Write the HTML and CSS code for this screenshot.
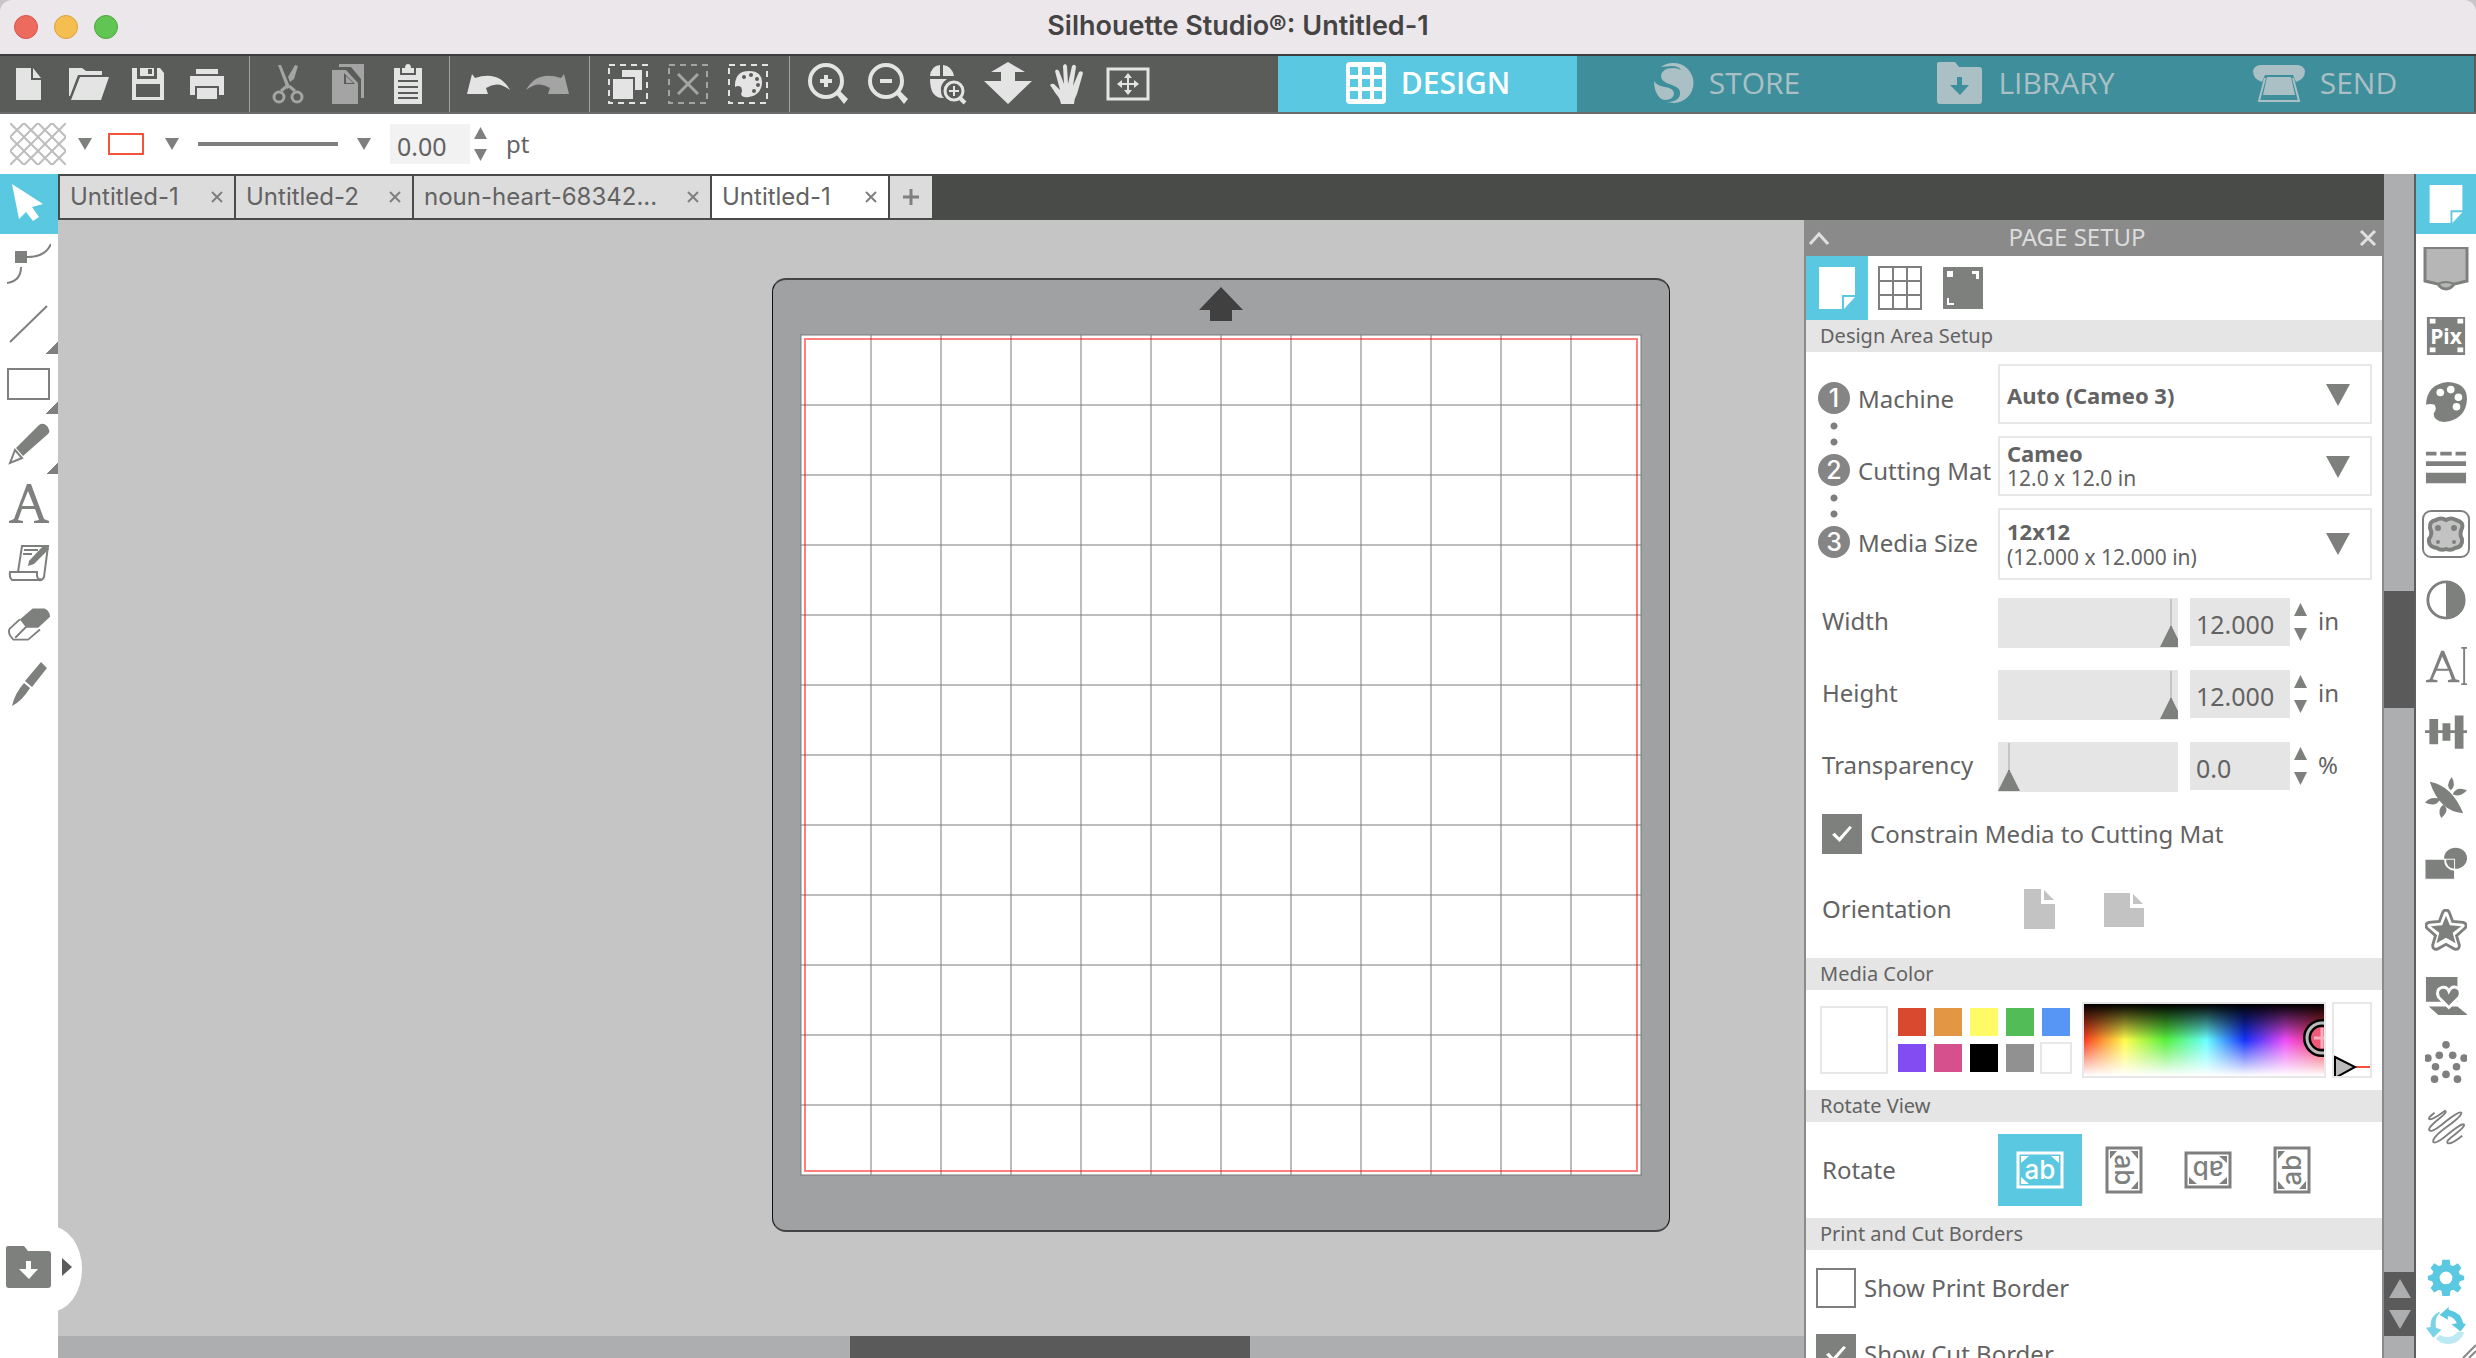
FILE: index.html
```html
<!DOCTYPE html>
<html lang="en">
<head>
<meta charset="utf-8">
<title>Silhouette Studio®: Untitled-1</title>
<link rel="stylesheet" href="styles.css">
</head>
<body>
<svg class="defs" aria-hidden="true">
  <symbol id="i-page" viewBox="0 0 44 44"><path d="M4 1h36v28H27v14H4z"/><path d="M29 31h11L29 43z"/></symbol>
  <symbol id="i-folder" viewBox="0 0 48 44"><path d="M3 1h16l4 5h20q3 0 3 3v31q0 3-3 3H4q-3 0-3-3V3q0-2 2-2z"/><path class="hole" d="M21 16h5v8h7l-9 10-10-10h7z"/></symbol>
  <pattern id="hatch" width="14" height="14" patternUnits="userSpaceOnUse"><path d="M0 0l14 14M14 0L0 14" stroke="#bdbdbd" stroke-width="2" fill="none"/></pattern>
</svg>

<header class="titlebar">
  <div class="lights"><button class="light red" aria-label="Close"></button><button class="light amber" aria-label="Minimize"></button><button class="light green" aria-label="Zoom"></button></div>
  <h1>Silhouette Studio®: Untitled-1</h1>
</header>

<div class="toolbar">
  <div class="group first">
    <button class="tool" aria-label="New"><svg viewBox="0 0 44 44"><path d="M8 6h15v12h10v20H8z"/><path d="M25 6l8 10h-8z"/></svg></button>
    <button class="tool" aria-label="Open"><svg viewBox="0 0 44 44"><path d="M2 6h13l4 3h16v4H11L3 34H2z"/><path d="M13 15h29l-8 23H4z"/></svg></button>
    <button class="tool" aria-label="Save"><svg viewBox="0 0 44 44"><path fill-rule="evenodd" d="M6 6h5v11h20V6h3l4 5v27H6zM10 22v13h24V22z"/><path fill-rule="evenodd" d="M14 6h14v8H14zM22 7v5h4V7z"/></svg></button>
    <button class="tool" aria-label="Print"><svg viewBox="0 0 44 44"><path d="M11 7h22v5H11zM5 14h34v19h-5V24H10v9H5z"/><path d="M12 26h20v11H12z"/></svg></button>
  </div>
  <div class="group">
    <button class="tool off" aria-label="Cut"><svg viewBox="0 0 44 44"><path d="M12 3l3 0 9 22-3 2zM29 3l3 1-4 13-4 3-2-5z"/><path fill="none" stroke="currentColor" stroke-width="3" d="M21 24l-6 5M23 24l6 5"/><circle cx="13" cy="35" r="5" fill="none" stroke="currentColor" stroke-width="3"/><circle cx="31" cy="35" r="5" fill="none" stroke="currentColor" stroke-width="3"/></svg></button>
    <button class="tool off" aria-label="Copy"><svg viewBox="0 0 44 44"><path d="M13 2h25v34h-3V17L25 5H13z"/><path fill-rule="evenodd" d="M6 8h14l12 13v21H6zM18 11v11h11z"/><path d="M20 14l7 7h-7z"/></svg></button>
    <button class="tool" aria-label="Paste"><svg viewBox="0 0 44 44"><path d="M8 6h6v7h16V6h6v36H8z"/><path d="M16 6h3q0-4 3-4t3 4h3v5H16z"/><path class="dark" d="M12 18h20v2H12zM12 24h20v2H12zM12 30h20v2H12zM12 35h20v2H12z"/></svg></button>
  </div>
  <div class="group">
    <button class="tool" aria-label="Undo"><svg viewBox="0 0 44 44"><path d="M6 12l3 4q24-8 35 12Q32 18 20 26l2 6H1z"/></svg></button>
    <button class="tool off" aria-label="Redo"><svg viewBox="0 0 44 44"><path d="M38 12l-3 4Q11 8 0 28q12-10 24-2l-2 6h21z"/></svg></button>
  </div>
  <div class="group">
    <button class="tool" aria-label="Select all"><svg viewBox="0 0 44 44"><rect x="3" y="3" width="38" height="38" class="dash"/><path d="M16 8h20v20H29V15H16z"/><path d="M7 17h20v20H7z"/></svg></button>
    <button class="tool off" aria-label="Deselect"><svg viewBox="0 0 44 44"><rect x="3" y="3" width="38" height="38" class="dash"/><path class="line3" d="M12 12l20 20M32 12L12 32"/></svg></button>
    <button class="tool" aria-label="Select by color"><svg viewBox="0 0 44 44"><rect x="3" y="3" width="38" height="38" class="dash"/><path d="M9 22q1-13 14-13t13 12q-1 12-13 14-7 1-8-3 2-3 0-7-3-2-6 0z"/><g class="dark"><circle cx="18" cy="15" r="2"/><circle cx="25" cy="13" r="2"/><circle cx="31" cy="17" r="2"/><circle cx="32" cy="23" r="2"/><circle cx="28" cy="29" r="2"/></g></svg></button>
  </div>
  <div class="group last">
    <button class="tool" aria-label="Zoom in"><svg viewBox="0 0 44 44"><circle cx="20" cy="19" r="16" class="line4"/><path class="line4" d="M14 19h12M20 13v12"/><path d="M30 32l4-3 8 8-4 5z"/></svg></button>
    <button class="tool" aria-label="Zoom out"><svg viewBox="0 0 44 44"><circle cx="20" cy="19" r="16" class="line4"/><path class="line4" d="M14 19h12"/><path d="M30 32l4-3 8 8-4 5z"/></svg></button>
    <button class="tool" aria-label="Zoom selection"><svg viewBox="0 0 44 44"><path d="M4 14Q5 4 14 3v11zM17 3q9 1 11 11H17zM4 17h17q-7 5-6 12 0 5 3 7Q4 37 4 17z"/><circle cx="28" cy="29" r="9" fill="none" stroke="currentColor" stroke-width="3"/><path fill="none" stroke="currentColor" stroke-width="2" d="M23 29h10M28 24v10"/><path class="line4" d="M34 36l5 5"/></svg></button>
    <button class="tool wide" aria-label="Drag zoom"><svg viewBox="0 0 48 44"><path d="M24 0l17 10H31v9h17L24 42 0 19h17v-9H7z"/></svg></button>
    <button class="tool" aria-label="Pan"><svg viewBox="0 0 44 44"><path d="M15 42q-1-6-5-10L4 23q2-2 4-1l6 6L9 9q2-3 4 0l5 13-1-18q2-4 4 0l1 18 4-18q3-3 4 1l-3 19 6-14q3-2 4 1l-6 21q-3 5-3 10z"/></svg></button>
    <button class="tool" aria-label="Fit to page"><svg viewBox="0 0 44 44"><rect x="2" y="7" width="40" height="30" fill="none" stroke="currentColor" stroke-width="3"/><path fill="none" stroke="currentColor" stroke-width="2" d="M12 22h20M22 12v20"/><path d="M22 11l4 5h-8zM22 33l4-5h-8zM11 22l5-4v8zM33 22l-5-4v8z"/></svg></button>
  </div>
  <nav class="modes">
    <a href="#design" class="mode current"><svg class="mode-icon" viewBox="0 0 42 44"><rect x="1" y="1" width="40" height="42" rx="4"/><path class="gap" d="M5 6h8v8H5zM17 6h8v8h-8zM29 6h8v8h-8zM5 18h8v8H5zM17 18h8v8h-8zM29 18h8v8h-8zM5 30h8v8H5zM17 30h8v8h-8zM29 30h8v8h-8z"/></svg>DESIGN</a>
    <a href="#store" class="mode"><svg class="mode-icon" viewBox="0 0 42 44"><path d="M20 2a20 20 0 0 1 1 40l-8-1q13 0 14-8 1-6-8-9-11-3-11-9 1-8 12-8 5 0 8 2-2-4-10-4l-10 1q5-4 12-4z"/><path d="M1 20q3 5 11 6 8 1 9 6 0 6-8 7-4 0-6-2Q1 31 1 20z"/></svg>STORE</a>
    <a href="#library" class="mode"><svg class="mode-icon folder" viewBox="0 0 48 44"><use href="#i-folder"/></svg>LIBRARY</a>
    <a href="#send" class="mode"><svg class="mode-icon send" viewBox="0 0 54 40"><path d="M8 2h38q6 1 7 6 0 8-9 11l-3-7H13l-3 7Q1 16 1 8q1-5 7-6z"/><path d="M15 14h24l4 18H11z"/><path fill="none" stroke="currentColor" stroke-width="2" d="M13 15L7 38h40l-6-23"/></svg>SEND</a>
  </nav>
</div>

<div class="options">
  <button class="fill" aria-label="Fill pattern"><svg viewBox="0 0 56 42"><rect width="56" height="42" fill="url(#hatch)"/></svg></button>
  <button class="tri-down" aria-label="Fill menu"></button>
  <button class="stroke-box" aria-label="Line color"></button>
  <button class="tri-down" aria-label="Line color menu"></button>
  <button class="stroke-line" aria-label="Line style"></button>
  <button class="tri-down" aria-label="Line style menu"></button>
  <input id="weight" class="weight" type="text" value="0.00">
  <span class="spin"><button class="up" aria-label="Increase"></button><button class="down" aria-label="Decrease"></button></span>
  <label for="weight">pt</label>
</div>

<div class="main">
  <aside class="left">
    <button class="ltool active" aria-label="Select"><svg viewBox="0 0 44 44"><path d="M5 2l31 20-11 3 7 10-6 4-7-9-7 7z"/></svg></button>
    <button class="ltool" aria-label="Edit points"><svg viewBox="0 0 44 44"><path class="line" d="M0 41q14-2 14-16M18 15q20 1 26-13"/><path d="M8 9h12v12H8z"/></svg></button>
    <button class="ltool more" aria-label="Line"><svg viewBox="0 0 44 44"><path class="line" d="M3 40L40 4"/></svg></button>
    <button class="ltool more" aria-label="Rectangle"><svg viewBox="0 0 44 44"><rect x="1" y="7" width="41" height="30" class="line"/></svg></button>
    <button class="ltool more" aria-label="Draw"><svg viewBox="0 0 44 44"><path d="M9 26L32 3q4-3 8 1 4 5 1 8L16 34z"/><path class="line" d="M8 28L3 41l12-5z"/></svg></button>
    <button class="ltool" aria-label="Text"><svg viewBox="0 0 44 44"><path fill-rule="evenodd" d="M20 2h4l13 35 5 2v2H27v-2l5-1-4-11H15l-4 11 5 1v2H2v-2l5-2zM21 9l-6 15h12z"/></svg></button>
    <button class="ltool" aria-label="Sketch"><svg viewBox="0 0 44 44"><path class="thin" d="M11 30l4-26h26l-4 31q-2 4-5 3H5q-3-3-2-8h27v4q1 4 4 3M17 8h14M16 12h9"/><path d="M22 19L37 3l5 4-15 15-6 2z"/></svg></button>
    <button class="ltool" aria-label="Erase"><svg viewBox="0 0 48 44"><path d="M14 17L28 5h13q6 3 6 9L34 26H21z"/><path class="line" d="M14 17L3 27q-3 5 4 12h16l13-11M21 25L9 37"/></svg></button>
    <button class="ltool" aria-label="Knife"><svg viewBox="0 0 44 44"><path d="M34 0l6 6-15 19-7-6zM17 21l6 5Q15 39 5 44q3-13 12-23z"/></svg></button>
    <button class="drawer" aria-label="Open library"><svg viewBox="0 0 48 44"><use href="#i-folder"/></svg></button>
  </aside>

  <section class="work">
    <div class="tabs">
      <div class="tab t1"><a href="#t1">Untitled-1</a><button aria-label="Close tab"><svg viewBox="0 0 14 14"><path d="M2 2l10 10M12 2L2 12"/></svg></button></div>
      <div class="tab t2"><a href="#t2">Untitled-2</a><button aria-label="Close tab"><svg viewBox="0 0 14 14"><path d="M2 2l10 10M12 2L2 12"/></svg></button></div>
      <div class="tab t3"><a href="#t3">noun-heart-68342...</a><button aria-label="Close tab"><svg viewBox="0 0 14 14"><path d="M2 2l10 10M12 2L2 12"/></svg></button></div>
      <div class="tab t2 on"><a href="#t4">Untitled-1</a><button aria-label="Close tab"><svg viewBox="0 0 14 14"><path d="M2 2l10 10M12 2L2 12"/></svg></button></div>
      <button class="tab plus" aria-label="New tab"><svg viewBox="0 0 16 16"><path d="M8 0v16M0 8h16"/></svg></button>
    </div>
    <div class="stage">
      <div class="canvas">
        <div class="mat">
          <svg class="arrow" viewBox="0 0 44 34"><path d="M22 0l22 23H33v11H11V23H0z"/></svg>
          <div class="sheet"></div>
        </div>
      </div>
      <div class="hscroll"><div class="hthumb"></div></div>

      <section class="panel">
        <header class="panel-head">
          <button aria-label="Collapse"><svg viewBox="0 0 22 16"><path d="M2 14l9-10 9 10"/></svg></button>
          <h2>PAGE SETUP</h2>
          <button aria-label="Close panel"><svg viewBox="0 0 22 16"><path d="M3 1l14 14M17 1L3 15"/></svg></button>
        </header>
        <div class="panel-tabs">
          <button class="ptab active" aria-label="Page"><svg viewBox="0 0 44 44"><use href="#i-page"/></svg></button>
          <button class="ptab" aria-label="Grid"><svg viewBox="0 0 44 44"><path class="line" d="M1 1h42v42H1zM15 1v42M29 1v42M1 15h42M1 29h42"/></svg></button>
          <button class="ptab" aria-label="Registration marks"><svg viewBox="0 0 44 44"><path d="M2 1h40v42H2z"/><path class="white" d="M6 5h6v6H6zM31 5h7v8h-3V8h-4zM6 32h2v5h5v2H6z"/></svg></button>
        </div>
        <h3>Design Area Setup</h3>
        <div class="setup">
          <div class="pick"><span class="badge">1</span><label for="machine">Machine</label><span class="combo"><select id="machine"><option>Auto (Cameo 3)</option></select></span></div>
          <div class="pick dots"><span class="badge">2</span><label for="mat">Cutting Mat</label><span class="combo two"><select id="mat"><option>Cameo</option></select><span class="detail">12.0 x 12.0 in</span></span></div>
          <div class="pick dots"><span class="badge">3</span><label for="media">Media Size</label><span class="combo two tall"><select id="media"><option>12x12</option></select><span class="detail">(12.000 x 12.000 in)</span></span></div>
        </div>
        <div class="measures">
          <div class="measure"><label for="w">Width</label><span class="track"><input type="range" aria-label="Width slider" min="0" max="12" value="12"></span><input id="w" type="text" value="12.000"><span class="spin"><button class="up" aria-label="Increase"></button><button class="down" aria-label="Decrease"></button></span><span class="unit">in</span></div>
          <div class="measure"><label for="h">Height</label><span class="track"><input type="range" aria-label="Height slider" min="0" max="12" value="12"></span><input id="h" type="text" value="12.000"><span class="spin"><button class="up" aria-label="Increase"></button><button class="down" aria-label="Decrease"></button></span><span class="unit">in</span></div>
          <div class="measure"><label for="t">Transparency</label><span class="track"><input type="range" aria-label="Transparency slider" min="0" max="100" value="0"></span><input id="t" type="text" value="0.0"><span class="spin"><button class="up" aria-label="Increase"></button><button class="down" aria-label="Decrease"></button></span><span class="unit">%</span></div>
        </div>
        <label class="check constrain"><input type="checkbox" checked>Constrain Media to Cutting Mat</label>
        <div class="orient"><span>Orientation</span>
          <button aria-label="Portrait"><svg viewBox="0 0 44 44"><path d="M6 2h17v15h14v25H6z"/><path d="M26 3l10 10H26z"/></svg></button>
          <button aria-label="Landscape"><svg viewBox="0 0 44 44"><path d="M2 6h26v15h14v19H2z"/><path d="M31 7l10 10H31z"/></svg></button>
        </div>
        <h3>Media Color</h3>
        <div class="colors">
          <button class="swatch-big" aria-label="Current color"></button>
          <div class="swatches">
            <button class="c1" aria-label="Red"></button><button class="c2" aria-label="Orange"></button><button class="c3" aria-label="Yellow"></button><button class="c4" aria-label="Green"></button><button class="c5" aria-label="Blue"></button>
            <button class="c6" aria-label="Purple"></button><button class="c7" aria-label="Pink"></button><button class="c8" aria-label="Black"></button><button class="c9" aria-label="Gray"></button><button class="c10" aria-label="White"></button>
          </div>
          <div class="spectrum"><svg viewBox="0 0 40 72"><circle cx="38" cy="34" r="15" fill="#f05a78" stroke="#000" stroke-width="8"/><circle cx="38" cy="34" r="15" fill="none" stroke="#bbb" stroke-width="3"/><path d="M38 24v20M30 34h10" stroke="#f8b0be" stroke-width="3"/></svg></div>
          <div class="shade"><svg viewBox="0 0 36 72"><path d="M22 63h14" stroke="#f4503a" stroke-width="2"/><path d="M1 53l20 10L1 74z" fill="#bbb" stroke="#000" stroke-width="2"/></svg></div>
        </div>
        <h3>Rotate View</h3>
        <div class="rotate"><span>Rotate</span>
          <button class="active" aria-label="Rotate 0"><svg viewBox="0 0 48 48"><g id="ab"><rect x="2" y="7" width="44" height="34" fill="none" stroke="currentColor" stroke-width="3"/><path d="M5 10h8l-8 7zM43 10h-8l8 7zM5 38h8l-8-7z"/><text x="24" y="33" text-anchor="middle" font-size="26" font-weight="500" font-family="Inter, sans-serif">ab</text></g></svg></button>
          <button aria-label="Rotate 90"><svg viewBox="0 0 48 48"><g transform="rotate(90 24 24)"><use href="#ab"/></g></svg></button>
          <button aria-label="Rotate 180"><svg viewBox="0 0 48 48"><g transform="rotate(180 24 24)"><use href="#ab"/></g></svg></button>
          <button aria-label="Rotate 270"><svg viewBox="0 0 48 48"><g transform="rotate(270 24 24)"><use href="#ab"/></g></svg></button>
        </div>
        <h3>Print and Cut Borders</h3>
        <div class="borders">
          <label class="check"><input type="checkbox">Show Print Border</label>
          <label class="check"><input type="checkbox" checked>Show Cut Border</label>
        </div>
      </section>
    </div>
  </section>

  <div class="vscroll">
    <div class="vthumb"></div>
    <div class="varrows"><button class="up" aria-label="Scroll up"></button><button class="down" aria-label="Scroll down"></button></div>
  </div>

  <aside class="right">
    <button class="rtool active" aria-label="Page setup"><svg viewBox="0 0 44 44"><use href="#i-page"/></svg></button>
    <button class="rtool" aria-label="Mat"><svg viewBox="0 0 48 48"><path d="M4 2h40v34H34q-4 7-10 7t-10-7H4z" fill="#b5b6b5"/><path fill="none" stroke="currentColor" stroke-width="3" d="M3 1v34l13 3q3 5 8 5t8-5l13-3V1"/><path class="thin" d="M3 2h42M16 38q8-4 16 0"/></svg></button>
    <button class="rtool" aria-label="PixScan"><svg viewBox="0 0 44 44"><path d="M2 2h40v40H2z"/><path class="white" d="M5 4h6v5H5zM34 4h6v5h-6zM5 34h6v5H5zM34 34h6v5h-6z"/><text class="white" x="22" y="30" text-anchor="middle" font-size="22" font-weight="700" font-family="Open Sans, sans-serif">Pix</text></svg></button>
    <button class="rtool" aria-label="Fill"><svg viewBox="0 0 44 44"><path d="M1 25Q2 3 24 1q20 1 20 18-1 21-24 24-11-1-11-9 4-4 1-9-5-2-9 0z"/><g class="white"><circle cx="16" cy="12" r="4"/><circle cx="27" cy="9" r="4"/><circle cx="35" cy="17" r="4"/><circle cx="33" cy="27" r="4"/></g></svg></button>
    <button class="rtool" aria-label="Line style"><svg viewBox="0 0 44 44"><path d="M1 5h11v4H1zM16 5h12v4H16zM32 5h11v4H32zM1 15h42v5H1zM1 27h42v11H1z"/></svg></button>
    <button class="rtool" aria-label="Trace"><svg viewBox="0 0 48 48"><rect x="1" y="1" width="46" height="46" rx="8" fill="none" stroke="currentColor" stroke-width="2"/><path d="M24 10q5-3 10 0 8 2 6 8-3 6 0 11 1 8-7 9-4 3-9 1-5 2-9-1-9-1-8-9 4-5 1-11-1-7 6-8 5-3 10 0z" fill="#c2c3c2" stroke="currentColor" stroke-width="4"/><circle cx="16" cy="18" r="3"/><circle cx="32" cy="18" r="3"/><circle cx="16" cy="32" r="2"/><circle cx="32" cy="32" r="2"/></svg></button>
    <button class="rtool" aria-label="Image effects"><svg viewBox="0 0 44 44"><circle cx="22" cy="22" r="19" fill="none" stroke="currentColor" stroke-width="3"/><path d="M22 3a19 19 0 0 1 0 38z"/></svg></button>
    <button class="rtool" aria-label="Text style"><svg viewBox="0 0 44 44"><path fill-rule="evenodd" d="M17 6h3l12 30 4 1v2H24v-2l4-1-3-9H12l-4 9 5 1v2H1v-2l4-1zM18 12l-5 13h11z"/><path class="thin" d="M41 3v38M38 3h6M38 41h6"/></svg></button>
    <button class="rtool" aria-label="Align"><svg viewBox="0 0 48 44"><path d="M0 20h48v3H0zM5 7h10v29H5zM20 12h9v20h-9zM34 3h10v38H34z"/></svg></button>
    <button class="rtool" aria-label="Replicate"><svg viewBox="0 0 44 44"><path d="M5 5q23 4 35 33Q15 36 5 5zM28 0q5 9-1 14-6-5 1-14zM44 14q-7 8-15 4 4-9 15-4zM0 27q5-7 16-4-4 9-16 4zM17 43q-5-9 2-14 8 5-2 14z"/></svg></button>
    <button class="rtool" aria-label="Modify"><svg viewBox="0 0 44 44"><ellipse cx="32" cy="16" rx="12" ry="11"/><path d="M0 17h31v21H0z" stroke="#fff" stroke-width="1"/><path d="M21 17q0 10 10 11" fill="none" stroke="#fff" stroke-width="2"/></svg></button>
    <button class="rtool" aria-label="Offset"><svg viewBox="0 0 44 44"><path d="M22 1q3 0 4 4l3 8 11 1q5 2 2 6l-9 8 3 10q0 5-5 4l-9-5-9 5q-5 1-5-4l3-10-9-8q-3-4 2-6l11-1 3-8q1-4 4-4z" fill="none" stroke="currentColor" stroke-width="3"/><path d="M22 7l4 10 12 1-9 7 3 11-10-6-10 6 3-11-9-7 12-1z"/></svg></button>
    <button class="rtool" aria-label="3D"><svg viewBox="0 0 44 44"><path d="M1 2h33v26H1zM4 33h30l11 9H14z"/><path d="M25 34L14 23q-3-8 4-10 5-1 7 4 3-6 8-4 6 3 3 10z" stroke="#fff" stroke-width="3"/></svg></button>
    <button class="rtool" aria-label="Stipple"><svg viewBox="0 0 44 44"><circle cx="22" cy="4" r="4"/><circle cx="3" cy="18" r="4"/><circle cx="15" cy="15" r="4"/><circle cx="29" cy="15" r="4"/><circle cx="41" cy="18" r="4"/><circle cx="11" cy="27" r="4"/><circle cx="33" cy="27" r="4"/><circle cx="22" cy="35" r="4"/><circle cx="10" cy="40" r="4"/><circle cx="34" cy="40" r="4"/></svg></button>
    <button class="rtool" aria-label="Sketch effects"><svg viewBox="0 0 44 44"><path class="line" d="M10 6q-8 6-5 7 4 0 16-9 3 1-6 8-15 12-9 13 3 1 16-10 14-11 16-9 1 3-14 14Q6 33 9 37q3 2 17-10 15-12 15-8 0 2-10 10-10 7-7 9 4 1 15-8"/></svg></button>
    <button class="rtool blue push" aria-label="Preferences"><svg viewBox="0 0 44 44"><path fill-rule="evenodd" d="M18 3h8l1 6 3 1 5-3 4 5-3 4 1 3 5 2v4l-5 2-1 3 3 4-4 5-5-3-3 1-1 6h-8l-1-6-3-1-5 3-4-5 3-4-1-3-5-2v-4l5-2 1-3-3-4 4-5 5 3 3-1zM22 16a7 7 0 1 0 0 14 7 7 0 0 0 0-14z"/></svg></button>
    <button class="rtool blue" aria-label="Sync"><svg viewBox="0 0 44 44"><path d="M15 10l10-9v3q14 3 16 15l3 1-6 8-10-8 6-1q-3-7-10-8v4z"/><path opacity=".8" d="M15 6Q4 11 5 23l-5 1 8 11 9-9-6-2Q9 13 15 8z"/><path opacity=".4" d="M42 29q-4 12-17 13-9 0-14-6l4-4q12 6 20-4z"/></svg></button>
    <svg class="grip" viewBox="0 0 14 14"><path d="M1 14L14 1M7 14l7-7"/></svg>
  </aside>
</div>
</body>
</html>
```
FILE: styles.css
```css
:root {
  --accent: #5ac8e0;
  --dark: #5a5c5a;
  --icon: #7e807e;
  --text: #636363;
  --soft: #e5e5e5;
  --ui: "Noto Sans", "Open Sans", sans-serif;
  --sys: Inter, "Liberation Sans", sans-serif;
}
* { box-sizing: border-box; }
html, body { height: 100%; }
body {
  margin: 0;
  display: flex;
  flex-direction: column;
  overflow: hidden;
  background: #c9c5c8;
  color: var(--text);
  font: 24px/32px var(--ui);
}
button { padding: 0; border: 0; background: none; color: inherit; font: inherit; display: grid; place-items: center; }
svg { display: block; fill: currentColor; }
h1, h2, h3 { margin: 0; font-weight: 400; }
a { color: inherit; text-decoration: none; }
.defs { position: absolute; width: 0; height: 0; }
.line, .thin { fill: none; stroke: currentColor; stroke-width: 2; }
.line3 { fill: none; stroke: currentColor; stroke-width: 3; }
.line4 { fill: none; stroke: currentColor; stroke-width: 4; }
.white { fill: #fff; }
.dark { fill: var(--dark); }
.dash { fill: none; stroke: currentColor; stroke-width: 2; stroke-dasharray: 6 5; }

.titlebar {
  flex: none;
  height: 54px;
  display: grid;
  grid-template-columns: 200px 1fr 200px;
  align-items: center;
  background: #ece7ea;
  border-radius: 12px 12px 0 0;
}
.lights { display: flex; gap: 16px; padding-left: 14px; }
.light { width: 24px; height: 24px; border-radius: 50%; border: 1px solid; }
.red { background: #ec6a5e; border-color: #d6544a; }
.amber { background: #f4bf50; border-color: #d9a23c; }
.green { background: #61c554; border-color: #4ea73e; }
.titlebar h1 { text-align: center; font: 600 27px/50px var(--sys); color: #444; padding-bottom: 2px; }

.toolbar { flex: none; height: 60px; display: flex; background: var(--dark); border-top: 2px solid #3c3c3e; border-bottom: 2px solid #6a6b6a; color: #e4e4e4; }
.group { display: flex; padding: 0 11px 0 8px; border-right: 1px solid #a0a1a0; }
.group.first { padding: 0 13px 0 0; }
.group.first .tool { width: 59px; }
.group.last { border: 0; }
.tool { width: 60px; }
.tool svg { width: 44px; height: 44px; }
.tool.wide svg { width: 48px; }
.off { color: #a3a4a3; }
.modes { flex: none; width: 1196px; margin-left: auto; margin-right: 2px; display: grid; grid-template-columns: repeat(4, 1fr); background: #3f8e9b; color: #abc0c5; --hole: #3f8e9b; }
.mode { display: flex; align-items: center; justify-content: center; gap: 14px; padding-bottom: 2px; font: 500 30px/40px "Open Sans", sans-serif; }
.mode.current { background: var(--accent); color: #fff; font-weight: 600; --hole: var(--accent); }
.mode-icon { width: 42px; height: 44px; }
.mode-icon.folder { width: 48px; }
.mode-icon.send { width: 54px; height: 40px; }
.gap, .hole { fill: var(--hole, #fff); }

.options { flex: none; height: 60px; display: flex; align-items: center; padding-left: 10px; background: #fff; }
.fill svg { width: 56px; height: 42px; }
.tri-down { width: 14px; height: 12px; background: var(--icon); clip-path: polygon(0 0, 100% 0, 50% 100%); margin: 0 16px 0 12px; }
.stroke-box { width: 36px; height: 22px; border: 2px solid #f2543c; }
.stroke-box + .tri-down { margin: 0 19px 0 21px; }
.stroke-line { width: 140px; height: 4px; background: var(--icon); }
.stroke-line + .tri-down { margin: 0 19px; }
input[type="text"] { border: 0; border-radius: 0; padding: 4px 0 0 7px; background: var(--soft); color: var(--text); font: 25px/32px var(--ui); outline: 0; }
input.weight { width: 80px; height: 40px; background: #f2f2f2; }
.spin { display: grid; gap: 10px; margin: 0 19px 0 4px; }
.spin button { width: 13px; height: 12px; background: var(--icon); }
.up { clip-path: polygon(50% 0, 100% 100%, 0 100%); }
.down { clip-path: polygon(0 0, 100% 0, 50% 100%); }

.main { flex: 1; min-height: 0; display: grid; grid-template-columns: 58px 1fr 32px 60px; }
.left { display: flex; flex-direction: column; background: #fff; color: var(--icon); z-index: 1; }
.ltool { height: 60px; flex: none; width: 58px; }
.ltool svg { width: 44px; height: 44px; }
.active { background: var(--accent); color: #fff; }
.more { background: linear-gradient(to bottom right, transparent 50%, var(--icon) 50%) right bottom / 12px 12px no-repeat; }
.drawer { position: relative; margin: auto 0 46px; height: 86px; width: 82px; background: #fff; border-radius: 0 32px 32px 0 / 0 43px 43px 0; justify-items: start; padding: 0 0 4px 5px; }
.drawer svg { width: 48px; height: 44px; }
.drawer::after { content: ""; position: absolute; left: 62px; top: 32px; width: 10px; height: 18px; background: var(--dark); clip-path: polygon(0 0, 100% 50%, 0 100%); }

.work { min-width: 0; min-height: 0; display: flex; flex-direction: column; }
.tabs { flex: none; height: 46px; display: flex; gap: 2px; padding: 2px; background: #494b49; font: 24px/42px var(--sys); }
.tab { display: flex; align-items: center; justify-content: space-between; padding: 0 10px; background: #dcdcdc; white-space: nowrap; }
.t1 { width: 174px; }
.t2 { width: 176px; }
.t3 { width: 296px; }
.tab.on { background: #fff; }
.tab svg { width: 14px; height: 14px; fill: none; stroke: var(--icon); stroke-width: 2; }
.tab.plus { width: 42px; justify-content: center; }
.tab.plus svg { width: 16px; height: 16px; stroke-width: 3; }

.stage { flex: 1; min-height: 0; display: grid; grid-template-columns: minmax(0, 1fr) 580px; grid-template-rows: minmax(0, 1fr) 22px; }
.canvas { grid-area: 1 / 1 / 2 / 3; background: #c5c5c5; display: flex; justify-content: center; align-items: flex-start; padding-top: 58px; }
.mat { width: 898px; padding: 7px 0 54px; display: flex; flex-direction: column; align-items: center; gap: 13px; background: #a0a1a3; border: 2px solid #444; border-left: 1px solid #111; border-right: 1px solid #111; border-radius: 14px; }
.arrow { width: 44px; height: 34px; fill: #404040; }
.sheet {
  position: relative;
  width: 842px;
  height: 842px;
  border: 1px solid #8b8c8e;
  background:
    linear-gradient(to right, transparent 68px, rgba(128, 128, 128, .52) 68px) 1px 0 / 70px 100%,
    linear-gradient(transparent 68px, rgba(128, 128, 128, .52) 68px) 0 1px / 100% 70px,
    #fff;
}
.sheet::after { content: ""; position: absolute; inset: 3px; border: 2px solid rgba(255, 0, 0, .5); }
.hscroll { grid-area: 2 / 1 / 3 / 3; background: #adaeb0; padding-left: 792px; }
.hthumb { width: 400px; height: 100%; background: #5a5a5a; }

.panel { grid-area: 1 / 2 / 3 / 3; z-index: 1; min-height: 0; overflow: hidden; background: #fff; border: 2px solid #8a8a8a; border-top: 0; border-bottom: 0; }
.panel-head { height: 36px; display: flex; align-items: center; justify-content: space-between; padding: 0 2px; background: #8a8a8a; color: #e0e0e0; }
.panel-head h2 { flex: 1; padding: 0 34px 2px 0; text-align: center; font-size: 24px; line-height: 32px; color: #dcdcdc; }
.panel-head svg { width: 22px; height: 16px; fill: none; stroke: currentColor; stroke-width: 3; }
.panel-tabs { height: 64px; display: flex; gap: 1px; color: var(--icon); }
.ptab { width: 62px; }
.ptab svg { width: 44px; height: 44px; }
.panel h3 { height: 32px; padding-left: 14px; background: var(--soft); font-size: 20px; line-height: 32px; }

.setup { padding: 12px 10px 0 12px; display: grid; gap: 12px; }
.pick { position: relative; display: grid; grid-template-columns: 32px 148px 1fr; min-height: 60px; }
.pick > label { line-height: 70px; height: 60px; padding-left: 8px; white-space: nowrap; }
.badge { width: 32px; height: 32px; margin-top: 18px; border-radius: 50%; background: #858585; color: #fff; text-align: center; font: 500 25px/32px var(--sys); }
.pick.dots::before { content: ""; position: absolute; left: 12px; top: -14px; width: 8px; height: 24px; background: radial-gradient(circle at 4px 4px, var(--icon) 3px, transparent 4px) 0 0 / 8px 16px; }
.combo { display: grid; position: relative; height: 60px; border: 2px solid #e7e7e7; }
.combo.tall { height: 72px; }
.combo::after { content: ""; position: absolute; right: 20px; top: 18px; width: 24px; height: 22px; background: var(--icon); clip-path: polygon(0 0, 100% 0, 50% 100%); }
.combo.tall::after { top: 23px; }
.combo select, .detail { grid-area: 1 / 1; }
.combo select { appearance: none; border: 0; background: none; padding: 2px 0 0 7px; color: var(--text); font: 700 22px/28px var(--ui); outline: 0; }
.combo.two select { padding: 0 0 26px 7px; }
.detail { align-self: end; padding: 0 0 4px 7px; font-size: 21px; line-height: 24px; pointer-events: none; }
.tall .detail { padding-bottom: 9px; }

.measures { padding: 18px 0 0 16px; display: grid; gap: 22px; }
.measure { display: grid; grid-template-columns: 176px 180px 100px auto 1fr; height: 50px; }
.measure > label, .unit { line-height: 46px; }
.track { overflow: hidden; background: var(--soft); }
.measure input[type="text"] { width: 100px; height: 48px; margin-left: 12px; padding: 4px 0 0 6px; }
.measure .spin { margin: 5px 11px 0 16px; align-content: start; gap: 12px; }
.measure .spin button { height: 13px; }
input[type="range"] { appearance: none; display: block; margin: 0; width: 184px; height: 50px; background: none; }
input[type="range"]::-webkit-slider-thumb { appearance: none; width: 22px; height: 48px; background: linear-gradient(#c4c4c4 27px, var(--icon) 27px); clip-path: polygon(10px 0, 12px 0, 12px 28px, 22px 48px, 0 48px, 10px 28px); }
.check { display: flex; align-items: center; gap: 8px; height: 40px; line-height: 36px; }
.check input { appearance: none; margin: 0; width: 40px; height: 40px; border: 2px solid var(--icon); background: #fff; display: grid; place-items: center; }
.check input:checked { background: var(--icon); }
.check input:checked::before { content: ""; width: 20px; height: 16px; background: #fff; clip-path: polygon(0 55%, 14% 42%, 36% 72%, 88% 0, 100% 10%, 38% 100%); }
.constrain { margin: 22px 0 0 16px; }
.orient { display: flex; align-items: center; height: 104px; padding: 22px 0 16px 16px; }
.orient > span { width: 178px; }
.orient button { width: 80px; color: #c3c3c3; }
.orient button + button { margin-left: 4px; }
.orient svg { width: 44px; height: 44px; }

.colors { height: 100px; padding: 12px 10px 12px 14px; display: flex; align-items: center; }
.swatch-big { width: 68px; height: 68px; border: 2px solid #e7e7e7; }
.swatches { display: grid; grid-template-columns: repeat(5, 28px); gap: 8px; margin: 0 12px 0 10px; }
.swatches button { height: 28px; }
.c1 { background: #d8492f; } .c2 { background: #e39745; } .c3 { background: #fffb66; } .c4 { background: #52bd56; } .c5 { background: #5896f5; }
.c6 { background: #824cf3; } .c7 { background: #d7508e; } .c8 { background: #000; } .c9 { background: #919191; } .c10 { outline: 2px solid #e7e7e7; }
.spectrum { width: 244px; height: 76px; border: 2px solid #e7e7e7; overflow: hidden; display: flex; justify-content: flex-end;
  background:
    linear-gradient(#000, rgba(0, 0, 0, 0) 50%, rgba(255, 255, 255, 0) 50%, #fff),
    linear-gradient(to right, #fa3c1e, #fffb4b 17%, #55f03c 34%, #6ff 51%, #1530fa 67%, #ee4cf5 84%, #f0323c); }
.spectrum svg { width: 40px; height: 72px; }
.shade { width: 40px; height: 76px; margin-left: 6px; border: 2px solid #e7e7e7; }
.shade svg { width: 36px; height: 72px; }

.rotate { height: 96px; display: flex; align-items: center; padding-left: 16px; color: var(--icon); }
.rotate > span { width: 176px; color: var(--text); }
.rotate button { width: 84px; height: 72px; }
.rotate svg { width: 48px; height: 48px; }
.borders { padding: 18px 0 0 10px; display: grid; gap: 26px; }

.vscroll { display: flex; flex-direction: column; background: #adaeb0; border-right: 2px solid #5e5e5e; padding-top: 417px; }
.vthumb { height: 117px; background: #5a5a5a; }
.varrows { margin: auto -2px 22px 0; height: 64px; display: grid; gap: 12px; padding: 7px 0; justify-items: center; background: #5a5a5a; }
.varrows button { width: 22px; background: #adaeb0; }

.right { position: relative; display: flex; flex-direction: column; background: #fff; color: var(--icon); }
.rtool { flex: none; height: 66px; }
.rtool.active { height: 60px; margin-bottom: 3px; }
.rtool svg { width: 42px; height: 42px; }
.rtool:nth-child(2) svg, .rtool:nth-child(6) svg { width: 48px; height: 48px; }
.rtool.active svg { width: 40px; height: 40px; }
.rtool.blue { height: 49px; }
.blue { color: var(--accent); }
.push { margin-top: auto; }
.blue:not(.push) { margin-bottom: 8px; }
.rtool.blue svg { width: 40px; height: 40px; }
.grip { position: absolute; right: 0; bottom: 0; width: 14px; height: 14px; fill: none; stroke: #888; stroke-width: 2; }
```
